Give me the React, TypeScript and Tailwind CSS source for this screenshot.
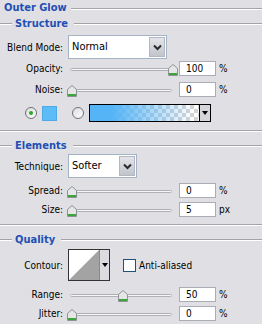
import React from "react";

const Groove = ({ className = "" }: { className?: string }) => (
  <div className={`h-[2px] border-t border-t-[#a3a3a8] border-b border-b-white ${className}`} />
);

const Header = ({ title, indent = true }: { title: string; indent?: boolean }) => (
  <div className="flex h-[14px] items-center">
    {indent && <Groove className="w-[12px]" />}
    <span className="ml-[3px] mr-[6px] text-[11px] font-bold text-[#1f4fb4]">{title}</span>
    <Groove className="flex-1" />
  </div>
);

const Thumb = () => (
  <svg width="10" height="12" viewBox="0 0 10 12">
    <path d="M0.5 4.5 L5 0.5 L9.5 4.5 L9.5 11.5 L0.5 11.5 Z" fill="#e6e6e6" stroke="#8a9494" />
    <rect x="1" y="9" width="8" height="2" fill="#3aa53a" />
  </svg>
);

const Slider = ({ value }: { value: number }) => (
  <div className="relative ml-[4px] h-[15px] w-[110px]">
    <div className="absolute left-[3px] right-[5px] top-[7px] h-[3px] rounded-full border border-[#aeb0b4] bg-[#f6f6f6]" />
    <div className="absolute top-[3px]" style={{ left: Math.round(value * 1.01) }}>
      <Thumb />
    </div>
  </div>
);

const NumBox = ({ v }: { v: string }) => (
  <div className="ml-[2px] flex h-[15px] w-[37px] items-center border border-[#a9adb5] bg-white pl-[6px] text-[10px]">
    {v}
  </div>
);

const Label = ({ text }: { text: string }) => (
  <div className="w-[63px] shrink-0 text-right">{text}</div>
);

const SliderRow = ({ label, value, text, unit, className }: { label: string; value: number; text: string; unit: string; className: string }) => (
  <div className={`flex h-[15px] items-center ${className}`}>
    <Label text={label} />
    <Slider value={value} />
    <NumBox v={text} />
    <span className="ml-[3px]">{unit}</span>
  </div>
);

const Chevron = () => (
  <svg width="9" height="7" viewBox="0 0 9 7">
    <path d="M1 1.5 L4.5 5 L8 1.5" fill="none" stroke="#2a2a2a" strokeWidth="2" />
  </svg>
);

const Select = ({ value, width }: { value: string; width: string }) => (
  <div className={`ml-[5px] flex h-[24px] items-center border border-[#a5b3c6] bg-white ${width}`}>
    <span className="flex-1 pl-[3px] text-[11px]">{value}</span>
    <div className="mr-[1px] flex h-[20px] w-[16px] items-center justify-center border border-[#b3b7c2] bg-gradient-to-b from-[#e4e5ea] to-[#c2c4cc]">
      <Chevron />
    </div>
  </div>
);

const Radio = ({ on }: { on: boolean }) => (
  <div className="flex h-[12px] w-[12px] items-center justify-center rounded-full border border-[#6e7178] bg-gradient-to-br from-[#dcdcdc] to-white">
    {on && <div className="h-[4px] w-[4px] rounded-full bg-[#2aa82a]" />}
  </div>
);

export default function App() {
  return (
    <div className="h-[324px] w-[262px] overflow-hidden bg-[#e0e0e4] font-['DejaVu_Sans_Condensed','DejaVu_Sans',sans-serif] text-[10px] text-black">
      <div className="flex h-[17px] items-center">
        <span className="pl-[4px] pr-[4px] text-[11px] font-bold text-[#1f4fb4]">Outer Glow</span>
        <Groove className="flex-1" />
      </div>
      <Header title="Structure" />

      <div className="mt-[4px] flex h-[24px] items-center">
        <Label text="Blend Mode:" />
        <Select value="Normal" width="w-[99px]" />
      </div>
      <SliderRow label="Opacity:" value={100} text="100" unit="%" className="mt-[2px]" />
      <SliderRow label="Noise:" value={0} text="0" unit="%" className="mt-[6px]" />

      <div className="mt-[7px] flex h-[18px] items-center pl-[25px]">
        <Radio on />
        <div className="ml-[5px] h-[15px] w-[15px] border border-[#4fa9e4] bg-[#5cbcf8]" />
        <div className="ml-[15px]">
          <Radio on={false} />
        </div>
        <div className="ml-[5px] flex h-[18px] w-[122px] border border-black">
          <div className="relative flex-1 bg-[conic-gradient(#d4d4d4_25%,#ffffff_0_50%,#d4d4d4_0_75%,#ffffff_0)] bg-[length:8px_8px]">
            <div className="absolute inset-0 bg-gradient-to-r from-[#55b4f6] from-20% to-transparent to-95%" />
          </div>
          <div className="flex w-[11px] items-center justify-center border-l border-black bg-[#d6d6da]">
            <div className="h-0 w-0 border-x-[3px] border-t-[4px] border-x-transparent border-t-black" />
          </div>
        </div>
      </div>

      <Groove className="mt-[8px]" />
      <div className="mt-[7px]">
        <Header title="Elements" />
      </div>
      <div className="mt-[1px] flex h-[24px] items-center">
        <Label text="Technique:" />
        <Select value="Softer" width="w-[69px]" />
      </div>
      <SliderRow label="Spread:" value={0} text="0" unit="%" className="mt-[5px]" />
      <SliderRow label="Size:" value={0} text="5" unit="px" className="mt-[4px]" />

      <Groove className="mt-[7px]" />
      <div className="mt-[7px]">
        <Header title="Quality" />
      </div>
      <div className="mt-[2px] flex h-[32px] items-center">
        <Label text="Contour:" />
        <div className="ml-[5px] flex h-[32px] w-[42px] border border-[#333]">
          <svg width="30" height="30" viewBox="0 0 30 30" className="bg-white">
            <path d="M0 30 L30 0 L30 30 Z" fill="#a3a3a3" />
          </svg>
          <div className="flex flex-1 items-center justify-center border-l border-[#888] bg-[#dcdce0]">
            <div className="h-0 w-0 border-x-[3px] border-t-[4px] border-x-transparent border-t-black" />
          </div>
        </div>
        <div className="ml-[13px] h-[13px] w-[13px] border border-[#1c5180] bg-white" />
        <span className="ml-[3px]">Anti-aliased</span>
      </div>
      <SliderRow label="Range:" value={50} text="50" unit="%" className="mt-[6px]" />
      <SliderRow label="Jitter:" value={0} text="0" unit="%" className="mt-[4px]" />
    </div>
  );
}
